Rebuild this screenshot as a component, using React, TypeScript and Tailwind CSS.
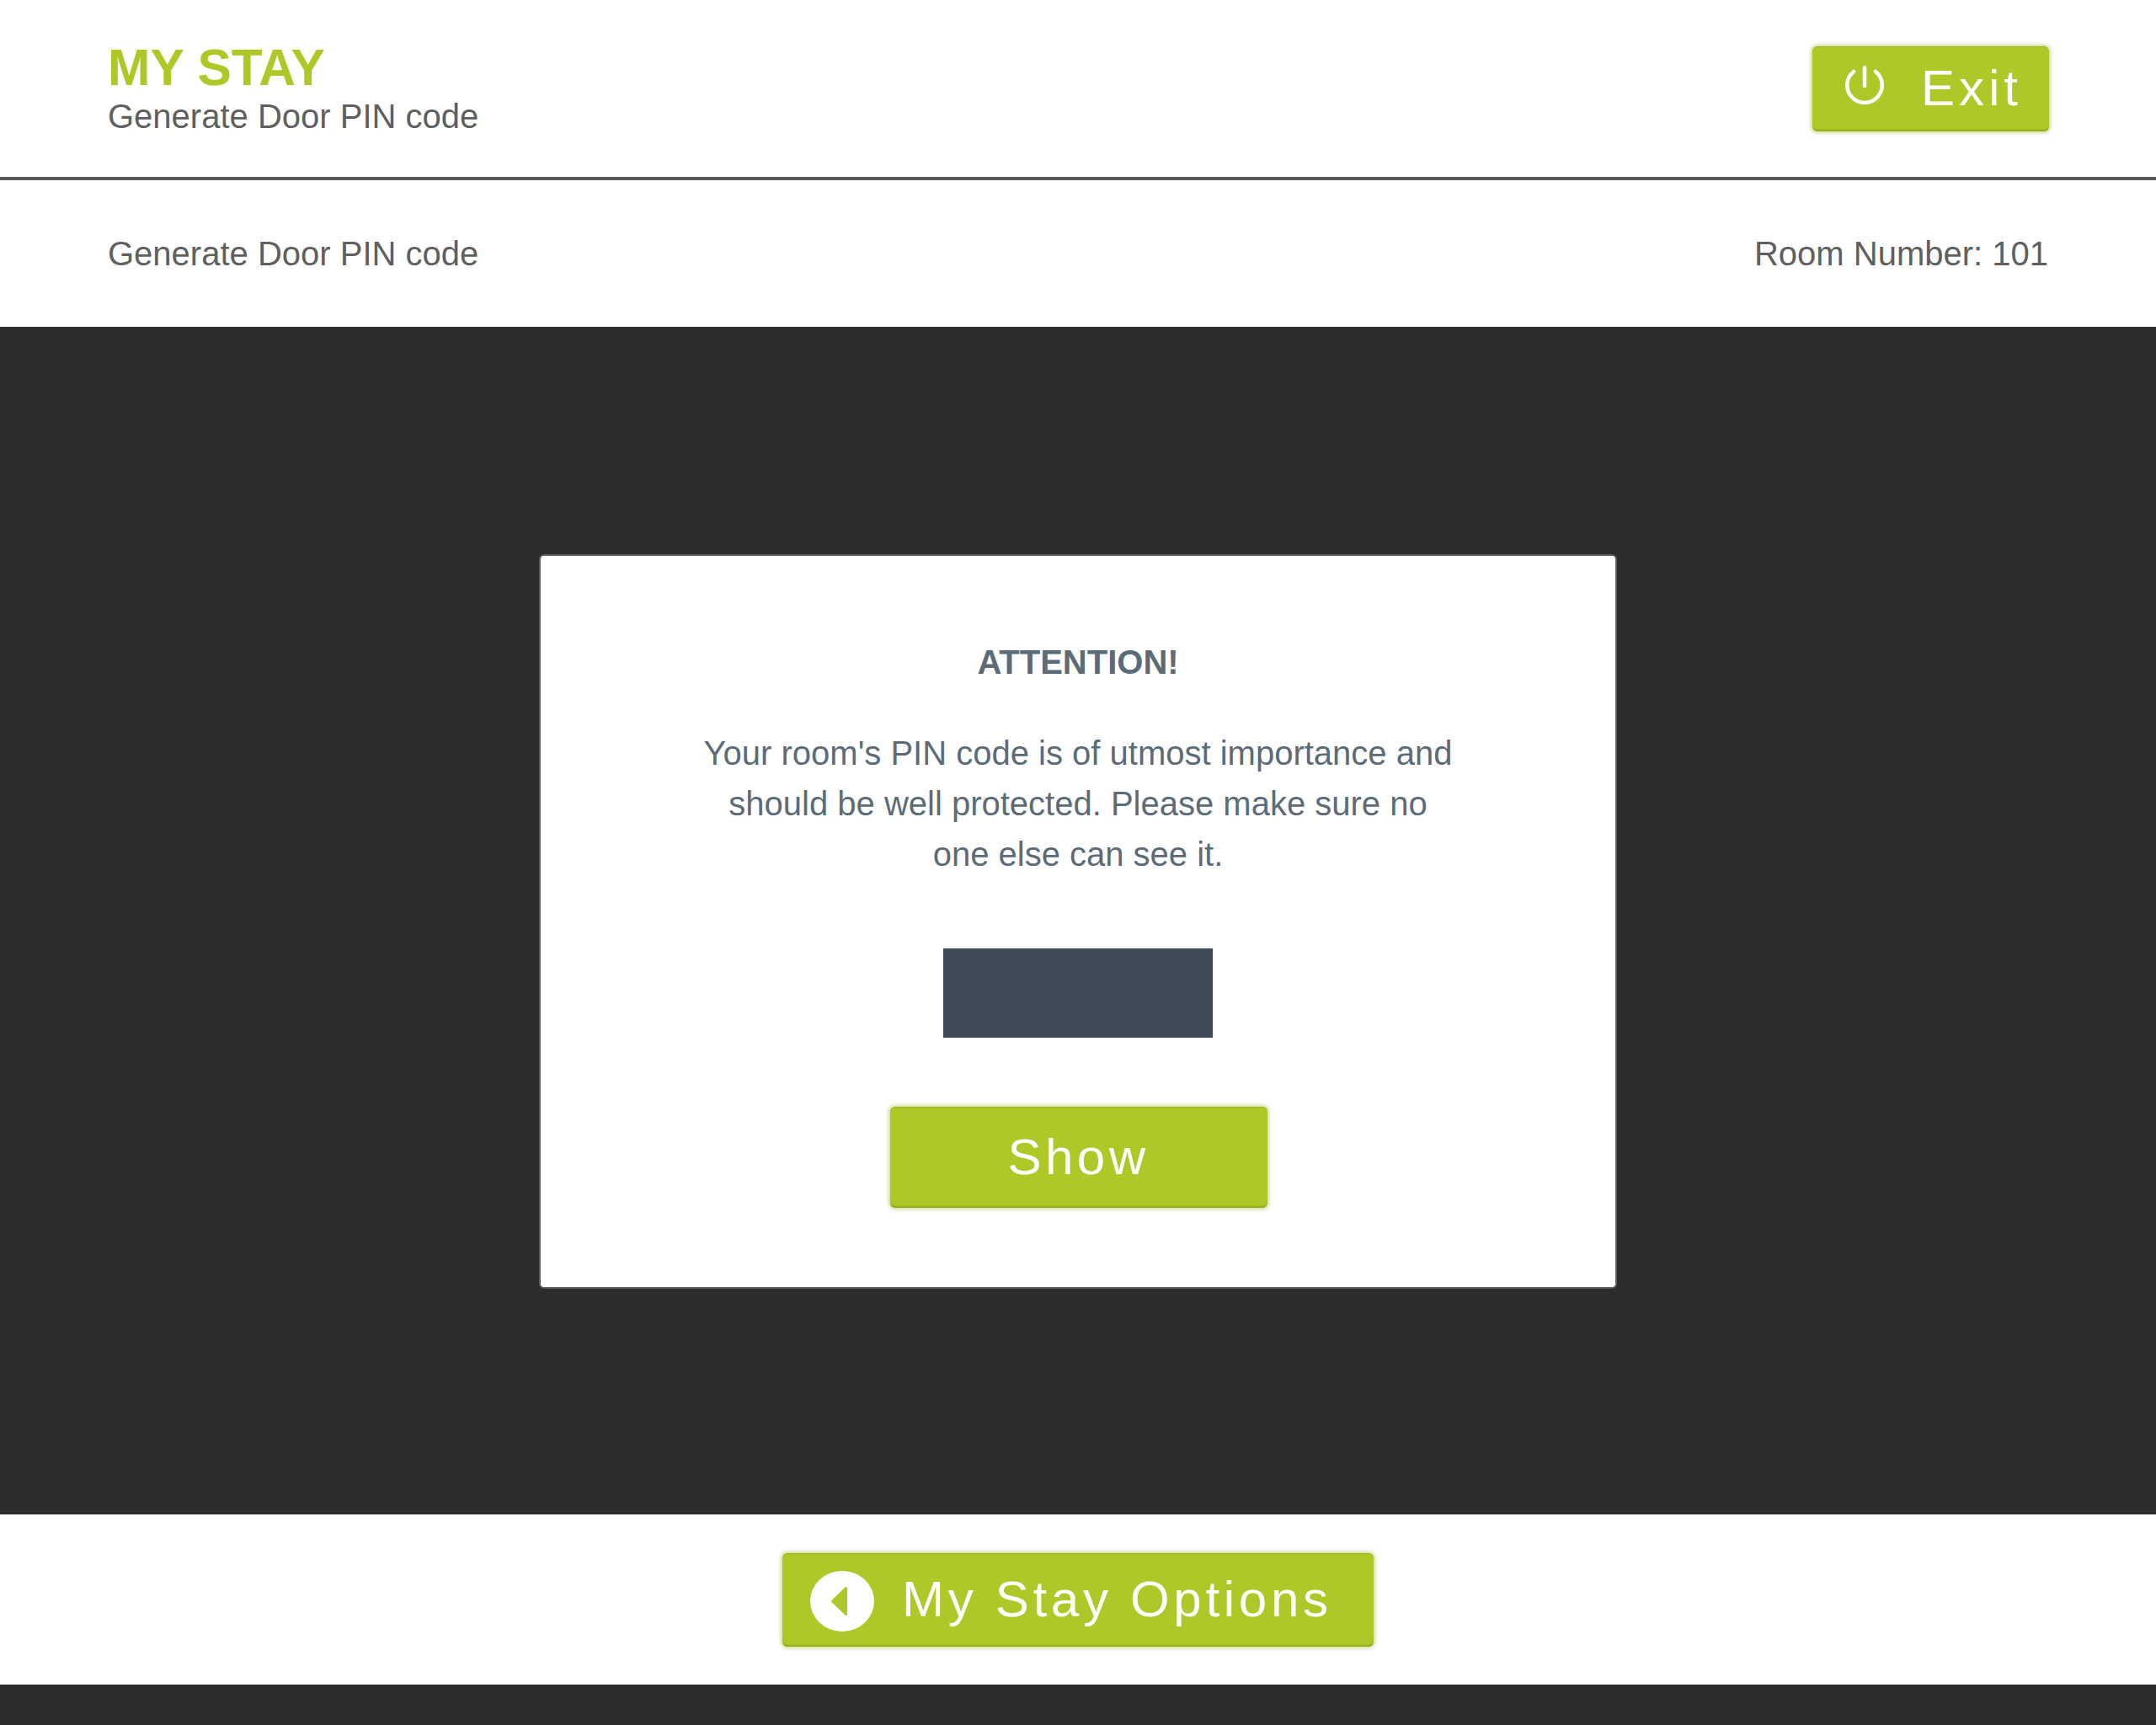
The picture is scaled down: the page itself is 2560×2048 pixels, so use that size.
const font = "font-['Liberation_Sans',Arial,sans-serif]";
const btn =
  'flex items-center rounded-[6px] bg-[#aec927] text-white text-[60px] leading-none shadow-[0_0_4px_2px_rgba(150,175,30,0.45),inset_0_-3px_2px_-1px_rgba(140,160,20,0.8),inset_0_2px_1px_-1px_rgba(140,160,20,0.5)]';

function PowerIcon() {
  return (
    <svg width="46" height="46" viewBox="0 0 46 46" fill="none" stroke="white" strokeWidth="4.5" strokeLinecap="round">
      <path d="M10 7 A20.75 20.75 0 1 0 36 7" />
      <path d="M23 2.25 V 24" />
    </svg>
  );
}

function BackIcon() {
  return (
    <svg className="mt-[3px]" width="76" height="76" viewBox="0 0 76 76">
      <ellipse cx="38" cy="38" rx="38" ry="36" fill="white" />
      <path d="M26.5 38 L42.5 22.5 V53.5 Z" fill="#aec927" stroke="#aec927" strokeWidth="3" strokeLinejoin="round" />
    </svg>
  );
}

export default function App() {
  return (
    <div className={`${font} flex min-h-[2048px] flex-col bg-[#2d2d2d] text-[#5f5f5f]`}>
      <header className="flex h-[214px] items-center justify-between border-b-4 border-[#5a5a5a] bg-white pl-[128px] pr-[127px]">
        <div className="flex flex-col">
          <h1 className="text-[60.5px] font-bold leading-[60px] text-[#aec927]">MY STAY</h1>
          <p className="mt-[5px] text-[40px] leading-[46px]">Generate Door PIN code</p>
        </div>
        <button className={`${btn} h-[101px] w-[281px] pl-[39px]`}>
          <span className="-mt-[8px]">
            <PowerIcon />
          </span>
          <span className="ml-[44px] tracking-[5px]">Exit</span>
        </button>
      </header>

      <div className="flex h-[174px] items-center justify-between bg-white px-[128px] text-[40px] leading-[46px]">
        <span>Generate Door PIN code</span>
        <span>Room Number: 101</span>
      </div>

      <main className="flex h-[1410px] items-center justify-center pt-[1px]">
        <div className="flex h-[872px] w-[1280px] flex-col items-center rounded-[6px] border-2 border-[#5f5f5f] bg-white pt-[103px] text-center text-[40px] text-[#5c6b78]">
          <h2 className="font-bold leading-[46px]">ATTENTION!</h2>
          <p className="mt-[55px] w-[960px] leading-[60px]">
            Your room's PIN code is of utmost importance and
            <br />
            should be well protected. Please make sure no
            <br />
            one else can see it.
          </p>
          <div className="mt-[82px] h-[106px] w-[320px] bg-[#3f4a56]" />
          <button className={`${btn} ml-[1px] mt-[82px] h-[120px] w-[448px] justify-center tracking-[4.5px]`}>Show</button>
        </div>
      </main>

      <footer className="flex h-[202px] items-center justify-center bg-white">
        <button className={`${btn} h-[111px] w-[702px] pl-[33px]`}>
          <BackIcon />
          <span className="ml-[33px] tracking-[4.7px]">My Stay Options</span>
        </button>
      </footer>
    </div>
  );
}
